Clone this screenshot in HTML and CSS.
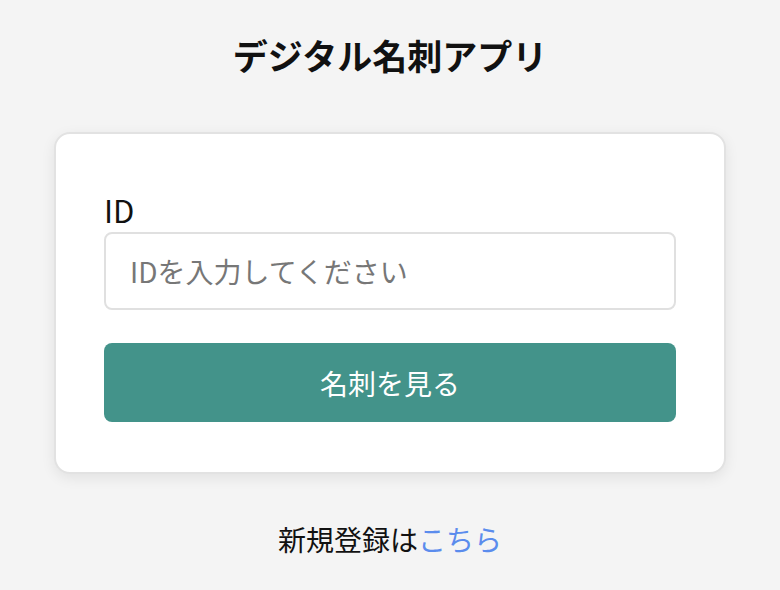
FILE: index.html
```html
<!DOCTYPE html>
<html lang="ja">
<head>
    <meta charset="UTF-8">
    <title>デジタル名刺アプリ</title>
    <link rel="stylesheet" href="styles.css">
</head>
<body>
    <h1 class="title">デジタル名刺アプリ</h1>

    <form class="card" onsubmit="return false;">
        <label for="card-id" class="label">ID</label>
        <input type="text" id="card-id" class="id-input" placeholder="IDを入力してください">
        <button type="submit" class="view-button">名刺を見る</button>
    </form>

    <p class="register">新規登録は<a href="register.html">こちら</a></p>
</body>
</html>
```

FILE: styles.css
```css
:root {
    --background: #f4f4f4;
    --teal: #43938a;
    --link-blue: #5b8ced;
    --border-gray: #e0e0e0;
}

* {
    margin: 0;
    padding: 0;
    box-sizing: border-box;
    font-family: 'Noto Sans CJK JP', 'Noto Sans', sans-serif;
}

body {
    background-color: var(--background);
    color: #111;
    padding: 30px 54px 0;
}

.title {
    text-align: center;
    font-size: 35px;
    font-weight: bold;
    line-height: 50px;
}

.card {
    margin-top: 52px;
    display: flex;
    flex-direction: column;
    background-color: white;
    border: 2px solid #e2e2e2;
    border-radius: 16px;
    box-shadow: 0 4px 14px rgba(0,0,0,0.08);
    padding: 56px 48px 50px;
}

.label {
    font-size: 31px;
    line-height: 40px;
    margin-bottom: 2px;
}

.id-input {
    height: 78px;
    border: 2px solid var(--border-gray);
    border-radius: 8px;
    padding: 0 24px;
    font-size: 28px;
    color: #111;
    outline: none;
}

.id-input::placeholder {
    color: #777;
}

.view-button {
    margin-top: 33px;
    height: 79px;
    background-color: var(--teal);
    color: white;
    border: none;
    border-radius: 8px;
    font-size: 28px;
    cursor: pointer;
}

.register {
    margin-top: 45px;
    text-align: center;
    font-size: 28px;
    line-height: 40px;
}

.register a {
    color: var(--link-blue);
    text-decoration: none;
}
```
